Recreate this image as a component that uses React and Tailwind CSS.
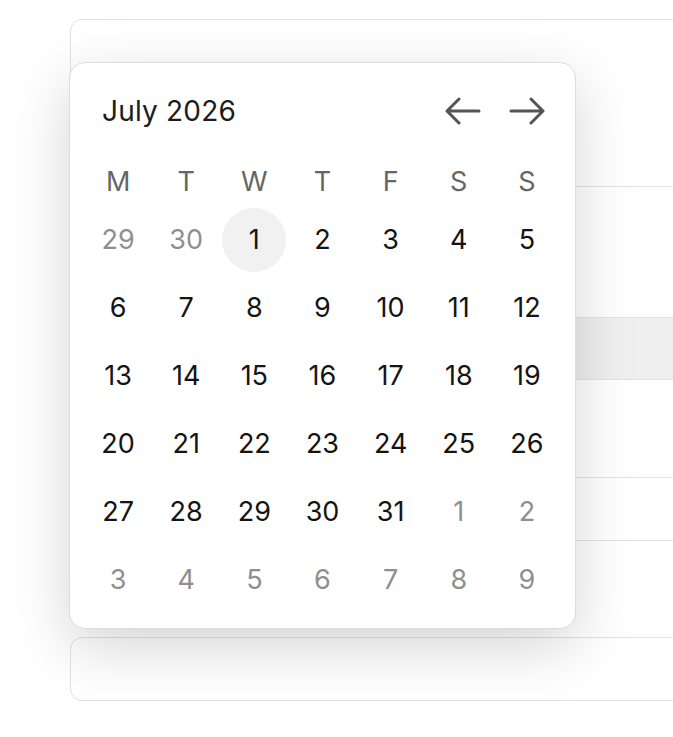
import React from 'react';

const weekdays = ['M', 'T', 'W', 'T', 'F', 'S', 'S'];

// july 2026 starts on a wednesday, monday-first grid
const buildDays = () => {
    const days = [{n: 29, out: true}, {n: 30, out: true}];
    for (let i = 1; i <= 31; i++) days.push({n: i, out: false});
    let next = 1;
    while (days.length < 42) days.push({n: next++, out: true});
    return days;
};

const ArrowIcon = ({dir}) => (
    <svg width="36" height="28" viewBox="0 0 36 28" fill="none" stroke="#555555" strokeWidth="3"
         strokeLinecap="round" strokeLinejoin="round">
        {dir === 'left'
            ? <path d="M34 14H2M14 2L2 14l12 12"/>
            : <path d="M2 14h32M22 2l12 12-12 12"/>}
    </svg>
);

const Field = ({className}) => (
    <div className={`ml-[70px] w-[700px] border border-[#e2e2e2] rounded-xl ${className}`}/>
);

const App = () => {
    const days = buildDays();

    return (
        <div className="relative h-[737px] bg-white overflow-hidden"
             style={{fontFamily: 'Inter, "Noto Sans", sans-serif'}}>

            {/* the form behind the picker */}
            <div className="pt-[19px] flex flex-col">
                <Field className="h-[168px]"/>
                <Field className="h-[63px] mt-[130px] bg-[#efefef]"/>
                <Field className="h-[64px] mt-[97px]"/>
                <Field className="h-[64px] mt-[96px]"/>
            </div>

            {/* date picker popover */}
            <div
                className="absolute left-[69px] top-[62px] w-[507px] h-[567px] bg-white border border-[#dcdcdc] rounded-2xl shadow-[0_18px_60px_rgba(0,0,0,0.17)] px-[14px] pt-[15px]">
                <div className="h-[66px] flex items-center justify-between pl-[18px] pr-[16px]">
                    <span className="text-[28px] text-[#1c1c1c] tracking-[0.2px]">July 2026</span>
                    <div className="flex items-center gap-[28px]">
                        <button type="button" className="flex items-center"><ArrowIcon dir="left"/></button>
                        <button type="button" className="flex items-center"><ArrowIcon dir="right"/></button>
                    </div>
                </div>

                <div className="grid grid-cols-7 mt-[14px] h-[48px]">
                    {weekdays.map((d, i) => (
                        <div key={i} className="flex items-center justify-center text-[27px] text-[#666666]">{d}</div>
                    ))}
                </div>

                <div className="grid grid-cols-7">
                    {days.map((d, i) => (
                        <div key={i} className="h-[68px] flex items-center justify-center">
                            <div
                                className={`w-[64px] h-[64px] rounded-full flex items-center justify-center text-[27px] ${d.out ? 'text-[#8f8f8f]' : 'text-[#141414]'} ${!d.out && d.n === 1 ? 'bg-[#f1f1f1]' : ''}`}>
                                {d.n}
                            </div>
                        </div>
                    ))}
                </div>
            </div>
        </div>
    );
};

export default App;
